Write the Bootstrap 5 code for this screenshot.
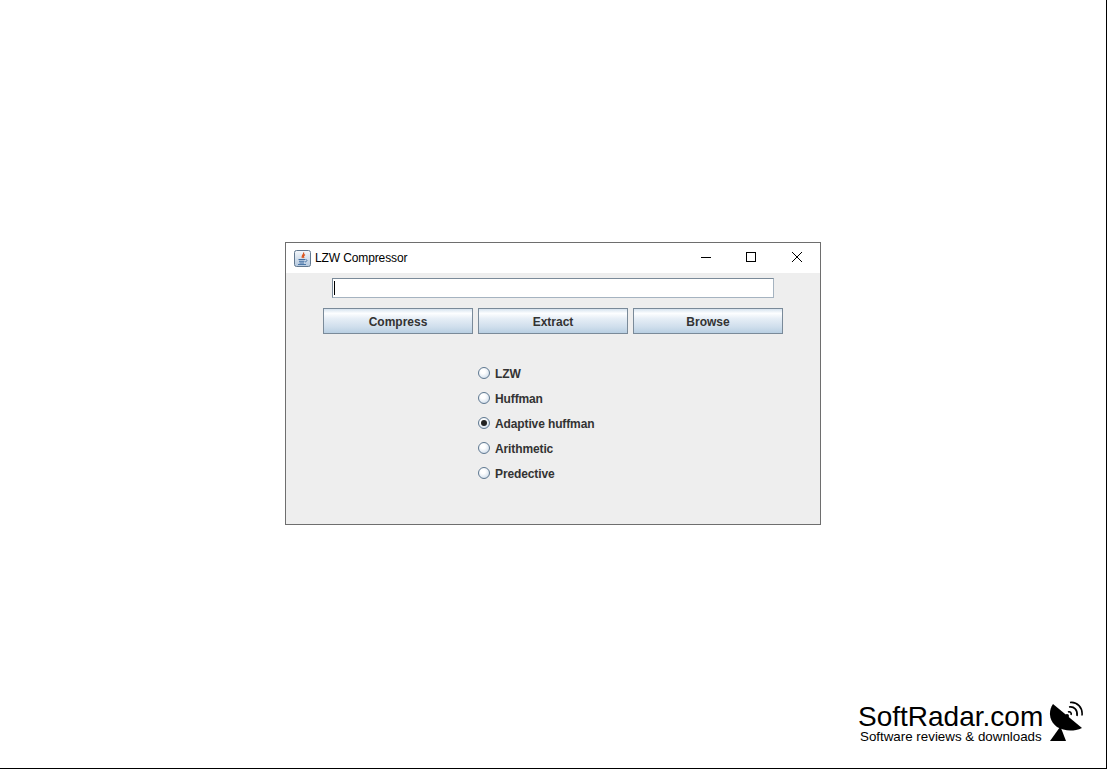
<!DOCTYPE html>
<html lang="en">
<head>
<meta charset="utf-8">
<title>LZW Compressor</title>
<link href="https://cdn.jsdelivr.net/npm/bootstrap@5.3.0/dist/css/bootstrap.min.css" rel="stylesheet">
<style>
html,body{margin:0;height:100%;background:#fff;overflow:hidden}
.page-frame{width:1107px;height:769px;border-right:1px solid #000;border-bottom:1px solid #000;padding:242px 0 0 285px;position:relative;font-family:"Liberation Sans",Arial,sans-serif}
.app-win{width:536px;height:283px;border:1px solid #6e6e6e;background:#eeeeee}
.app-title{height:30px;background:#fff;padding-left:8px;color:#000}
.app-title .ttl{margin-left:4px;line-height:30px;height:30px;font-family:"Liberation Sans",sans-serif;font-size:12px;letter-spacing:-.12px}
.win-btns{margin-left:auto;padding-right:17px;gap:33px}
.win-btns svg{display:block}
.win-btns svg:last-child{margin-left:1px}
.path-field{width:442px;height:20px;margin:5px 0 0 46px;background:#fff;border:1px solid #7a8a99;border-right-color:#a5b3c0;border-bottom-color:#a5b3c0;padding:2px 1px}
.caret-bar{width:1px;height:14px;background:#000}
.btn-row{margin:10px 0 0 37px;gap:5px}
.swing-btn{width:150px;height:26px;padding:1px 0 0;border:1px solid #7a8a99;border-radius:0;font-size:12px;font-weight:700;color:#333;line-height:24px;background:linear-gradient(#d6e3ef 0%,#fdfeff 18%,#e6eef6 40%,#cfdeec 75%,#b9cfe3 100%)}
.swing-btn:hover{color:#333;border-color:#7a8a99}
.radio-col{margin:27px 0 0 192px}
.radio-row{height:25px;gap:5px;font-size:12px;letter-spacing:-.12px;font-weight:700;color:#333}
.radio-dot{width:12px;height:12px;margin-top:-1px;border-radius:50%;border:1px solid #5f7890;background:radial-gradient(circle at 40% 35%,#fff 25%,#e3ebf3 60%,#bccde0 100%);flex:none;display:flex;align-items:center;justify-content:center}
.radio-dot i{display:block;width:6px;height:6px;border-radius:50%;background:#222}
.brand-mark{position:absolute;left:858px;top:700px;width:230px;height:48px;color:#000}
.brand-name{font-size:28px;line-height:26px;position:absolute;left:0;top:4px;white-space:nowrap}
.brand-tag{font-size:13.35px;line-height:14px;position:absolute;left:2px;top:30px;white-space:nowrap}
.brand-dish{position:absolute;left:191px;top:1px}
</style>
</head>
<body>
<div class="page-frame">
  <div class="app-win">
    <div class="app-title d-flex align-items-center">
      <svg width="17" height="17" viewBox="0 0 17 17">
        <defs><linearGradient id="g" x1="0" y1="0" x2="0" y2="1"><stop offset="0" stop-color="#f4f7fb"/><stop offset="1" stop-color="#b4c8de"/></linearGradient></defs>
        <rect x=".5" y=".5" width="16" height="16" rx="2" fill="url(#g)" stroke="#62788f"/>
        <path d="M9.500 2.500c1 2-2.500 3-1 5.500M11 4.500c-1.500 1-2 2-1 3.500" fill="none" stroke="#d9541e" stroke-width="1.200"/>
        <path d="M4.500 9.500h6.500M5 11.300h5.500M5.500 13h4.500" stroke="#3f6ea3" stroke-width="1.100" fill="none"/>
        <path d="M11.500 9.500c2 0 2 2-.5 2.500M4 14.500h8" stroke="#3f6ea3" stroke-width=".9" fill="none"/>
      </svg>
      <span class="ttl">LZW Compressor</span>
      <div class="win-btns d-flex align-items-center">
        <svg width="12" height="12" viewBox="0 0 12 12"><path d="M1 5.500h10" stroke="#000"/></svg>
        <svg width="12" height="12" viewBox="0 0 12 12"><rect x="1.500" y=".5" width="9" height="9" fill="none" stroke="#000"/></svg>
        <svg width="12" height="12" viewBox="0 0 12 12"><path d="M1 0l10 10M11 0L1 10" stroke="#000" stroke-width="1"/></svg>
      </div>
    </div>
    <div class="path-field"><div class="caret-bar"></div></div>
    <div class="btn-row d-flex">
      <button type="button" class="btn swing-btn">Compress</button>
      <button type="button" class="btn swing-btn">Extract</button>
      <button type="button" class="btn swing-btn">Browse</button>
    </div>
    <div class="radio-col d-flex flex-column">
      <div class="radio-row d-flex align-items-center"><span class="radio-dot"></span><span>LZW</span></div>
      <div class="radio-row d-flex align-items-center"><span class="radio-dot"></span><span>Huffman</span></div>
      <div class="radio-row d-flex align-items-center"><span class="radio-dot"><i></i></span><span>Adaptive huffman</span></div>
      <div class="radio-row d-flex align-items-center"><span class="radio-dot"></span><span>Arithmetic</span></div>
      <div class="radio-row d-flex align-items-center"><span class="radio-dot"></span><span>Predective</span></div>
    </div>
  </div>
  <div class="brand-mark">
    <span class="brand-name">SoftRadar.com</span>
    <span class="brand-tag">Software reviews &amp; downloads</span>
    <svg class="brand-dish" width="36" height="42" viewBox="0 0 36 42">
      <path d="M4 3C-1 10 0 20 8 26c7 4 16 5 25 1L4 3z" fill="#000"/>
      <path d="M11 26L1 40h16l-5-13z" fill="#000"/>
      <path d="M19 11c2-1 4 1 3 3" fill="none" stroke="#000" stroke-width="1.600"/>
      <path d="M20 6c5-1 9 3 8 9" fill="none" stroke="#000" stroke-width="1.600"/>
      <path d="M21 1.500c7-1 13 5 12 13" fill="none" stroke="#000" stroke-width="1.600"/>
      <circle cx="18" cy="15" r="2" fill="#000"/>
    </svg>
  </div>
</div>
<script src="https://cdn.jsdelivr.net/npm/bootstrap@5.3.0/dist/js/bootstrap.bundle.min.js"></script>
</body>
</html>
